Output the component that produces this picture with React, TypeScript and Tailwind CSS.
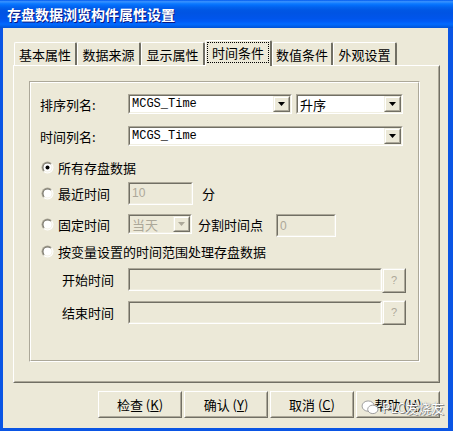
import React from 'react'

const cjk = "font-['Noto_Sans_CJK_SC','Noto_Sans',sans-serif]"

function Sunken({ className = '', disabled = false, children }: { className?: string; disabled?: boolean; children?: React.ReactNode }) {
  return (
    <div className={`border border-t-[#ACA899] border-l-[#ACA899] border-b-white border-r-white ${className}`}>
      <div
        className={`flex h-full w-full items-center border border-t-[#716F64] border-l-[#716F64] border-b-[#F1EFE2] border-r-[#F1EFE2] ${
          disabled ? 'bg-[#ECE9D8]' : 'bg-white'
        }`}
      >
        {children}
      </div>
    </div>
  )
}

function Raised({ className = '', children }: { className?: string; children?: React.ReactNode }) {
  return (
    <div className={`border border-t-[#F1EFE2] border-l-[#F1EFE2] border-b-[#716F64] border-r-[#716F64] ${className}`}>
      <div className="flex h-full w-full items-center justify-center border border-t-white border-l-white border-b-[#ACA899] border-r-[#ACA899] bg-[#ECE9D8]">
        {children}
      </div>
    </div>
  )
}

function Arrow({ disabled = false }: { disabled?: boolean }) {
  return (
    <svg width="7" height="4" viewBox="0 0 7 4">
      <polygon points="0,0 7,0 3.5,4" fill={disabled ? '#ACA899' : '#000'} />
    </svg>
  )
}

function Combo({ text, className = '', disabled = false, mono = false }: { text: string; className?: string; disabled?: boolean; mono?: boolean }) {
  return (
    <Sunken className={className} disabled={disabled}>
      <span
        className={`flex-1 pl-[2px] leading-none ${mono ? "font-['Liberation_Mono',monospace] text-[12px]" : `${cjk} text-[13px]`} ${
          disabled ? 'text-[#ACA899]' : 'text-black'
        }`}
      >
        {text}
      </span>
      <Raised className="h-full w-[17px]">
        <Arrow disabled={disabled} />
      </Raised>
    </Sunken>
  )
}

function Radio({ checked = false, id }: { checked?: boolean; id: string }) {
  return (
    <svg width="13" height="13" viewBox="0 0 13 13" className="shrink-0">
      <defs>
        <linearGradient id={`o${id}`} x1="0" y1="0" x2="1" y2="1">
          <stop offset="0.45" stopColor="#ACA899" />
          <stop offset="0.55" stopColor="#FFFFFF" />
        </linearGradient>
        <linearGradient id={`i${id}`} x1="0" y1="0" x2="1" y2="1">
          <stop offset="0.45" stopColor="#716F64" />
          <stop offset="0.55" stopColor="#F1EFE2" />
        </linearGradient>
      </defs>
      <circle cx="6.5" cy="6.5" r="6" fill={`url(#o${id})`} />
      <circle cx="6.5" cy="6.5" r="5" fill={`url(#i${id})`} />
      <circle cx="6.5" cy="6.5" r="4" fill="#FFFFFF" />
      {checked && <circle cx="6.5" cy="6.5" r="2" fill="#000" />}
    </svg>
  )
}

function RadioLabel({ text, checked = false, id, wide = false }: { text: string; checked?: boolean; id: string; wide?: boolean }) {
  return (
    <div className={`flex items-center gap-[4px] pl-[1px] ${wide ? '' : 'w-[88px]'}`}>
      <Radio checked={checked} id={id} />
      <span className={`${cjk} text-[13px] leading-none text-black`}>{text}</span>
    </div>
  )
}

function Tab({ label, width, active = false }: { label: string; width: string; active?: boolean }) {
  if (active) {
    return (
      <div
        className={`relative z-10 -mb-[1px] flex h-[26px] ${width} items-center justify-center rounded-t-[2px] border-l border-t border-r-2 border-l-white border-t-white border-r-[#716F64] bg-[#ECE9D8] px-[1px] pt-[1px] pb-[3px]`}
      >
        <div className={`flex h-full w-full items-center justify-center border border-dotted border-black ${cjk} text-[13px] leading-none text-black`}>
          {label}
        </div>
      </div>
    )
  }
  return (
    <div
      className={`flex h-[23px] ${width} items-center justify-center rounded-t-[2px] border-l border-t border-r-2 border-l-white border-t-white border-r-[#716F64] bg-[#ECE9D8] ${cjk} text-[13px] leading-none text-black`}
    >
      {label}
    </div>
  )
}

function DlgButton({ label, hot }: { label: string; hot: string }) {
  return (
    <div className="h-[27px] w-[84px] border border-t-white border-l-white border-b-[#716F64] border-r-[#716F64]">
      <div className={`flex h-full w-full items-center justify-center border border-t-transparent border-l-transparent border-b-[#ACA899] border-r-[#ACA899] ${cjk} text-[13px] leading-none text-black`}>
        {label} (<span className="underline">{hot}</span>)
      </div>
    </div>
  )
}

export default function App() {
  return (
    <div className="flex h-[431px] w-[453px] flex-col bg-[#0A55E4]">
      {/* caption */}
      <div className="flex h-[28px] items-center bg-[linear-gradient(180deg,#0058EE_0%,#3A93FF_6%,#127DFF_12%,#036FFC_18%,#0262EE_26%,#0057E5_36%,#0054E3_46%,#0055EB_66%,#005BF5_76%,#026AFE_86%,#0062EF_92%,#0052D6_100%)] pl-[7px]">
        <span className={`${cjk} text-[14px] font-bold leading-none text-white [text-shadow:1px_1px_0_#0A1883]`}>存盘数据浏览构件属性设置</span>
      </div>

      {/* body */}
      <div className="relative mb-[3px] ml-[3px] mr-[5px] flex flex-1 flex-col bg-[#ECE9D8] pl-[10px] pt-[12px]">
        <div className="flex h-[25px] items-end pl-[1px]">
          <Tab label="基本属性" width="w-[63px]" />
          <Tab label="数据来源" width="w-[64px]" />
          <Tab label="显示属性" width="w-[64px]" />
          <Tab label="时间条件" width="w-[67px]" active />
          <Tab label="数值条件" width="w-[61px]" />
          <Tab label="外观设置" width="w-[64px]" />
        </div>

        {/* tab panel */}
        <div className="h-[318px] w-[427px] border border-t-white border-l-white border-b-[#716F64] border-r-[#716F64]">
          <div className="h-full w-full border border-t-transparent border-l-transparent border-b-[#ACA899] border-r-[#ACA899] pl-[14px] pt-[14px]">
            {/* group box */}
            <div className="h-[281px] w-[391px] border border-t-[#ACA899] border-l-[#ACA899] border-b-white border-r-white">
              <div className="flex h-full w-full flex-col border border-t-white border-l-white border-b-[#ACA899] border-r-[#ACA899] pl-[9px] pt-[11px]">
                <div className="flex h-[20px] items-center">
                  <span className={`w-[88px] ${cjk} text-[13px] leading-none text-black`}>排序列名:</span>
                  <Combo text="MCGS_Time" mono className="h-[20px] w-[164px]" />
                  <Combo text="升序" className="ml-[4px] h-[20px] w-[107px]" />
                </div>
                <div className="mt-[12px] flex h-[20px] items-center">
                  <span className={`w-[88px] ${cjk} text-[13px] leading-none text-black`}>时间列名:</span>
                  <Combo text="MCGS_Time" mono className="h-[20px] w-[275px]" />
                </div>

                <div className="mt-[11px] flex h-[20px] items-center">
                  <RadioLabel text="所有存盘数据" checked id="r1" wide />
                </div>

                <div className="mt-[5px] flex h-[22px] items-center">
                  <RadioLabel text="最近时间" id="r2" />
                  <Sunken disabled className="h-[23px] w-[65px]">
                    <span className="pl-[2px] font-['Liberation_Sans',sans-serif] text-[12px] leading-none text-[#ACA899]">10</span>
                  </Sunken>
                  <span className={`ml-[9px] ${cjk} text-[13px] leading-none text-black`}>分</span>
                </div>

                <div className="mt-[10px] flex h-[23px] items-start">
                  <div className="flex h-[20px] items-center">
                    <RadioLabel text="固定时间" id="r3" />
                  </div>
                  <Combo text="当天" disabled className="h-[20px] w-[64px]" />
                  <div className="flex h-[20px] items-center">
                    <span className={`ml-[6px] w-[78px] ${cjk} text-[13px] leading-none text-black`}>分割时间点</span>
                  </div>
                  <Sunken disabled className="h-[23px] w-[60px]">
                    <span className="pl-[2px] font-['Liberation_Sans',sans-serif] text-[12px] leading-none text-[#ACA899]">0</span>
                  </Sunken>
                </div>

                <div className="mt-[4px] flex h-[20px] items-center">
                  <RadioLabel text="按变量设置的时间范围处理存盘数据" id="r4" wide />
                </div>

                <div className="mt-[7px] flex h-[25px] items-start">
                  <span className={`flex h-[23px] w-[88px] items-center pl-[22px] ${cjk} text-[13px] leading-none text-black`}>开始时间</span>
                  <Sunken disabled className="h-[23px] w-[254px]" />
                  <Raised className="h-[25px] w-[24px]">
                    <span className="font-['Liberation_Sans',sans-serif] text-[11px] leading-none text-[#ACA899]">?</span>
                  </Raised>
                </div>

                <div className="mt-[7px] flex h-[25px] items-start">
                  <span className={`flex h-[24px] w-[88px] items-center pl-[22px] ${cjk} text-[13px] leading-none text-black`}>结束时间</span>
                  <Sunken disabled className="mt-[1px] h-[23px] w-[254px]" />
                  <Raised className="h-[25px] w-[24px]">
                    <span className="font-['Liberation_Sans',sans-serif] text-[11px] leading-none text-[#ACA899]">?</span>
                  </Raised>
                </div>
              </div>
            </div>
          </div>
        </div>

        {/* dialog buttons */}
        <div className="mt-[8px] flex w-[427px] justify-end gap-[2px]">
          <DlgButton label="检查" hot="K" />
          <DlgButton label="确认" hot="Y" />
          <DlgButton label="取消" hot="C" />
          <DlgButton label="帮助" hot="H" />
        </div>

        {/* watermark */}
        <div className="pointer-events-none absolute left-[358px] top-[372px] flex items-center gap-[2px] whitespace-nowrap">
          <svg width="19" height="15" viewBox="0 0 20 16">
            <ellipse cx="7.5" cy="6.5" rx="6.5" ry="5.5" fill="#fff" stroke="#9a9a9a" strokeWidth="1" />
            <ellipse cx="12.5" cy="10" rx="5.5" ry="4.5" fill="#fff" stroke="#9a9a9a" strokeWidth="1" />
          </svg>
          <span className={`${cjk} text-[13px] leading-none text-white [text-shadow:0_0_1px_#666,1px_1px_0_#888]`}>PLC发烧友</span>
        </div>
      </div>
    </div>
  )
}
